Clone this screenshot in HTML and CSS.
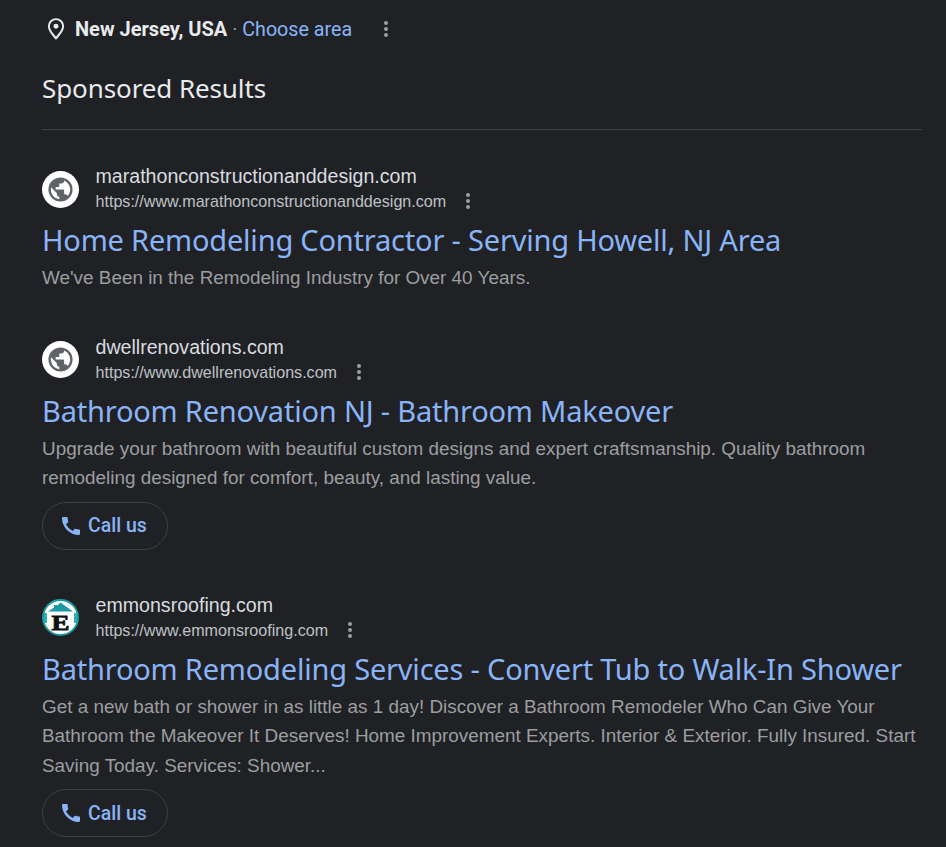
FILE: index.html
```html
<!DOCTYPE html>
<html lang="en">
<head>
<meta charset="utf-8">
<title>Sponsored Results</title>
<link rel="stylesheet" href="styles.css">
</head>
<body>
<main class="page">
  <div class="loc">
    <svg class="pin" viewBox="0 0 24 24" width="26" height="26"><path fill="#e8eaed" d="M12 2a7.500 7.500 0 0 0-7.500 7.500C4.500 14.500 12 22 12 22s7.500-7.500 7.500-12.500A7.500 7.500 0 0 0 12 2zm0 17.100C9.800 16.600 6.300 12.500 6.300 9.500a5.700 5.700 0 0 1 11.400 0c0 3-3.500 7.100-5.700 9.600z"/><circle cx="12" cy="9.500" r="2.300" fill="#e8eaed"/></svg>
    <span class="loc-text"><b>New Jersey, USA</b> <span class="sep">·</span> <a>Choose area</a></span>
    <span class="dots loc-dots"><i></i><i></i><i></i></span>
  </div>
  <h2 class="heading">Sponsored Results</h2>
  <hr class="rule">

  <article class="ad ad1">
    <div class="head">
      <span class="fav"><svg viewBox="0 0 24 24" width="29" height="29"><path fill="#5f6368" d="M12 2a10 10 0 1 0 0 20 10 10 0 0 0 0-20zM4 12c0-.6.1-1.200.2-1.800L9 15v1c0 1.100.9 2 2 2v2c-3.900-.5-7-3.900-7-8zm13.900 5.400c-.3-.8-1-1.400-1.900-1.400h-1v-3c0-.6-.4-1-1-1H8v-2h2c.6 0 1-.4 1-1V7h2c1.100 0 2-.9 2-2v-.4c2.900 1.200 5 4.100 5 7.400 0 2.100-.8 4-2.100 5.400z"/></svg></span>
      <div class="site"><div class="name">marathonconstructionanddesign.com</div><div class="urlrow"><span class="url">https://www.marathonconstructionanddesign.com</span><span class="dots"><i></i><i></i><i></i></span></div></div>
    </div>
    <h3 class="title">Home Remodeling Contractor - Serving Howell, NJ Area</h3>
    <p class="desc">We've Been in the Remodeling Industry for Over 40 Years.</p>
  </article>

  <article class="ad ad2">
    <div class="head">
      <span class="fav"><svg viewBox="0 0 24 24" width="29" height="29"><path fill="#5f6368" d="M12 2a10 10 0 1 0 0 20 10 10 0 0 0 0-20zM4 12c0-.6.1-1.200.2-1.800L9 15v1c0 1.100.9 2 2 2v2c-3.900-.5-7-3.900-7-8zm13.900 5.400c-.3-.8-1-1.400-1.900-1.400h-1v-3c0-.6-.4-1-1-1H8v-2h2c.6 0 1-.4 1-1V7h2c1.100 0 2-.9 2-2v-.4c2.900 1.200 5 4.100 5 7.400 0 2.100-.8 4-2.100 5.400z"/></svg></span>
      <div class="site"><div class="name">dwellrenovations.com</div><div class="urlrow"><span class="url">https://www.dwellrenovations.com</span><span class="dots"><i></i><i></i><i></i></span></div></div>
    </div>
    <h3 class="title">Bathroom Renovation NJ - Bathroom Makeover</h3>
    <p class="desc">Upgrade your bathroom with beautiful custom designs and expert craftsmanship. Quality bathroom remodeling designed for comfort, beauty, and lasting value.</p>
    <a class="call"><svg viewBox="0 0 24 24" width="24" height="24"><path fill="#8ab4f8" d="M20.010 15.380c-1.230 0-2.420-.2-3.530-.56a.977.977 0 0 0-1.010.24l-1.570 1.970c-2.830-1.350-5.480-3.900-6.890-6.830l1.950-1.660c.27-.28.35-.67.24-1.020-.37-1.110-.56-2.300-.56-3.530 0-.54-.45-.99-.99-.99H4.190C3.650 3 3 3.240 3 3.990 3 13.280 10.730 21 20.010 21c.71 0 .99-.63.99-1.180v-3.450c0-.54-.45-.99-.99-.99z"/></svg><span>Call us</span></a>
  </article>

  <article class="ad ad3">
    <div class="head">
      <span class="fav fav-e"><svg viewBox="0 0 37 37" width="37" height="37"><circle cx="18.500" cy="18.500" r="17.500" fill="#fff" stroke="#1c9aa0" stroke-width="2"/><path fill="#1c9aa0" d="M6 12.500 12 8.500V6h3v.8L18.500 3.500 31 12.500z"/><path fill="#2bb0b5" d="M2 14h3v10H2zM32 14h3v10h-3z"/><text x="9.500" y="30.500" textLength="18" lengthAdjust="spacingAndGlyphs" class="e">E</text></svg></span>
      <div class="site"><div class="name">emmonsroofing.com</div><div class="urlrow"><span class="url">https://www.emmonsroofing.com</span><span class="dots"><i></i><i></i><i></i></span></div></div>
    </div>
    <h3 class="title">Bathroom Remodeling Services - Convert Tub to Walk-In Shower</h3>
    <p class="desc">Get a new bath or shower in as little as 1 day! Discover a Bathroom Remodeler Who Can Give Your Bathroom the Makeover It Deserves! Home Improvement Experts. Interior &amp; Exterior. Fully Insured. Start Saving Today. Services: Shower...</p>
    <a class="call"><svg viewBox="0 0 24 24" width="24" height="24"><path fill="#8ab4f8" d="M20.010 15.380c-1.230 0-2.420-.2-3.530-.56a.977.977 0 0 0-1.010.24l-1.570 1.970c-2.830-1.350-5.480-3.900-6.890-6.830l1.950-1.660c.27-.28.35-.67.24-1.020-.37-1.110-.56-2.300-.56-3.530 0-.54-.45-.99-.99-.99H4.190C3.650 3 3 3.240 3 3.990 3 13.280 10.730 21 20.010 21c.71 0 .99-.63.99-1.180v-3.450c0-.54-.45-.99-.99-.99z"/></svg><span>Call us</span></a>
  </article>
</main>
</body>
</html>
```
FILE: styles.css
```css
html, body { margin: 0; height: 100%; background: #202124; overflow: hidden; }
body { font-family: Roboto, "Liberation Sans", Arial, sans-serif; color: #e8eaed; }
.page { padding: 0 24px 0 42px; }
.loc { display: flex; align-items: center; height: 30px; padding: 14px 0 0 1px; }
.pin { flex: none; }
.loc-text { margin-left: 6px; font-size: 19.700px; white-space: nowrap; }
.loc-text b { font-weight: 700; color: #e8eaed; font-size: 20px; }
.sep { color: #9aa0a6; }
.loc-text a { color: #8ab4f8; }
.heading { margin: 26px 0 0; font: 400 26px/36px "Noto Sans", Roboto, sans-serif; color: #e8eaed; letter-spacing: -0.1px; }
.rule { margin: 23px 0 0; border: 0; border-top: 1px solid #3c4043; }
.ad { margin-top: 34px; }
.ad2 { margin-top: 42px; }
.ad3 { margin-top: 43px; }
.head { display: flex; align-items: center; gap: 16.500px; }
.fav { flex: none; width: 37px; height: 37px; border-radius: 50%; background: #fff; display: flex; align-items: center; justify-content: center; }
.fav svg { display: block; }
.fav-e { background: none; }
.e { font: 900 21px "Liberation Serif", serif; fill: #111; stroke: #111; stroke-width: .8px; }
.name { font: 19.600px/24px "Liberation Sans", Arial, sans-serif; color: #dadce0; }
.urlrow { display: flex; align-items: center; height: 26px; }
.url { font: 16.100px/24px "Liberation Sans", Arial, sans-serif; color: #bdc1c6; }
.dots { display: inline-flex; flex-direction: column; gap: 2px; margin-left: 20px; }
.dots i { display: block; width: 4px; height: 4px; border-radius: 50%; background: #9aa0a6; }
.loc-dots { margin-left: 32px; }
.title { margin: 7px 0 0; font: 400 29px/38px "Noto Sans", Roboto, sans-serif; color: #8ab4f8; white-space: nowrap; letter-spacing: -0.2px; }
.desc { margin: 4px 0 0; font: 18.900px/29.500px "Liberation Sans", Arial, sans-serif; color: #9c9ea1; }
.call { display: inline-flex; align-items: center; gap: 5px; box-sizing: border-box; height: 48px; margin-top: 9px; padding: 0 20px 0 16px; border: 1px solid #3c4043; border-radius: 24px; color: #8ab4f8; font-size: 19.500px; font-weight: 500; }
```
